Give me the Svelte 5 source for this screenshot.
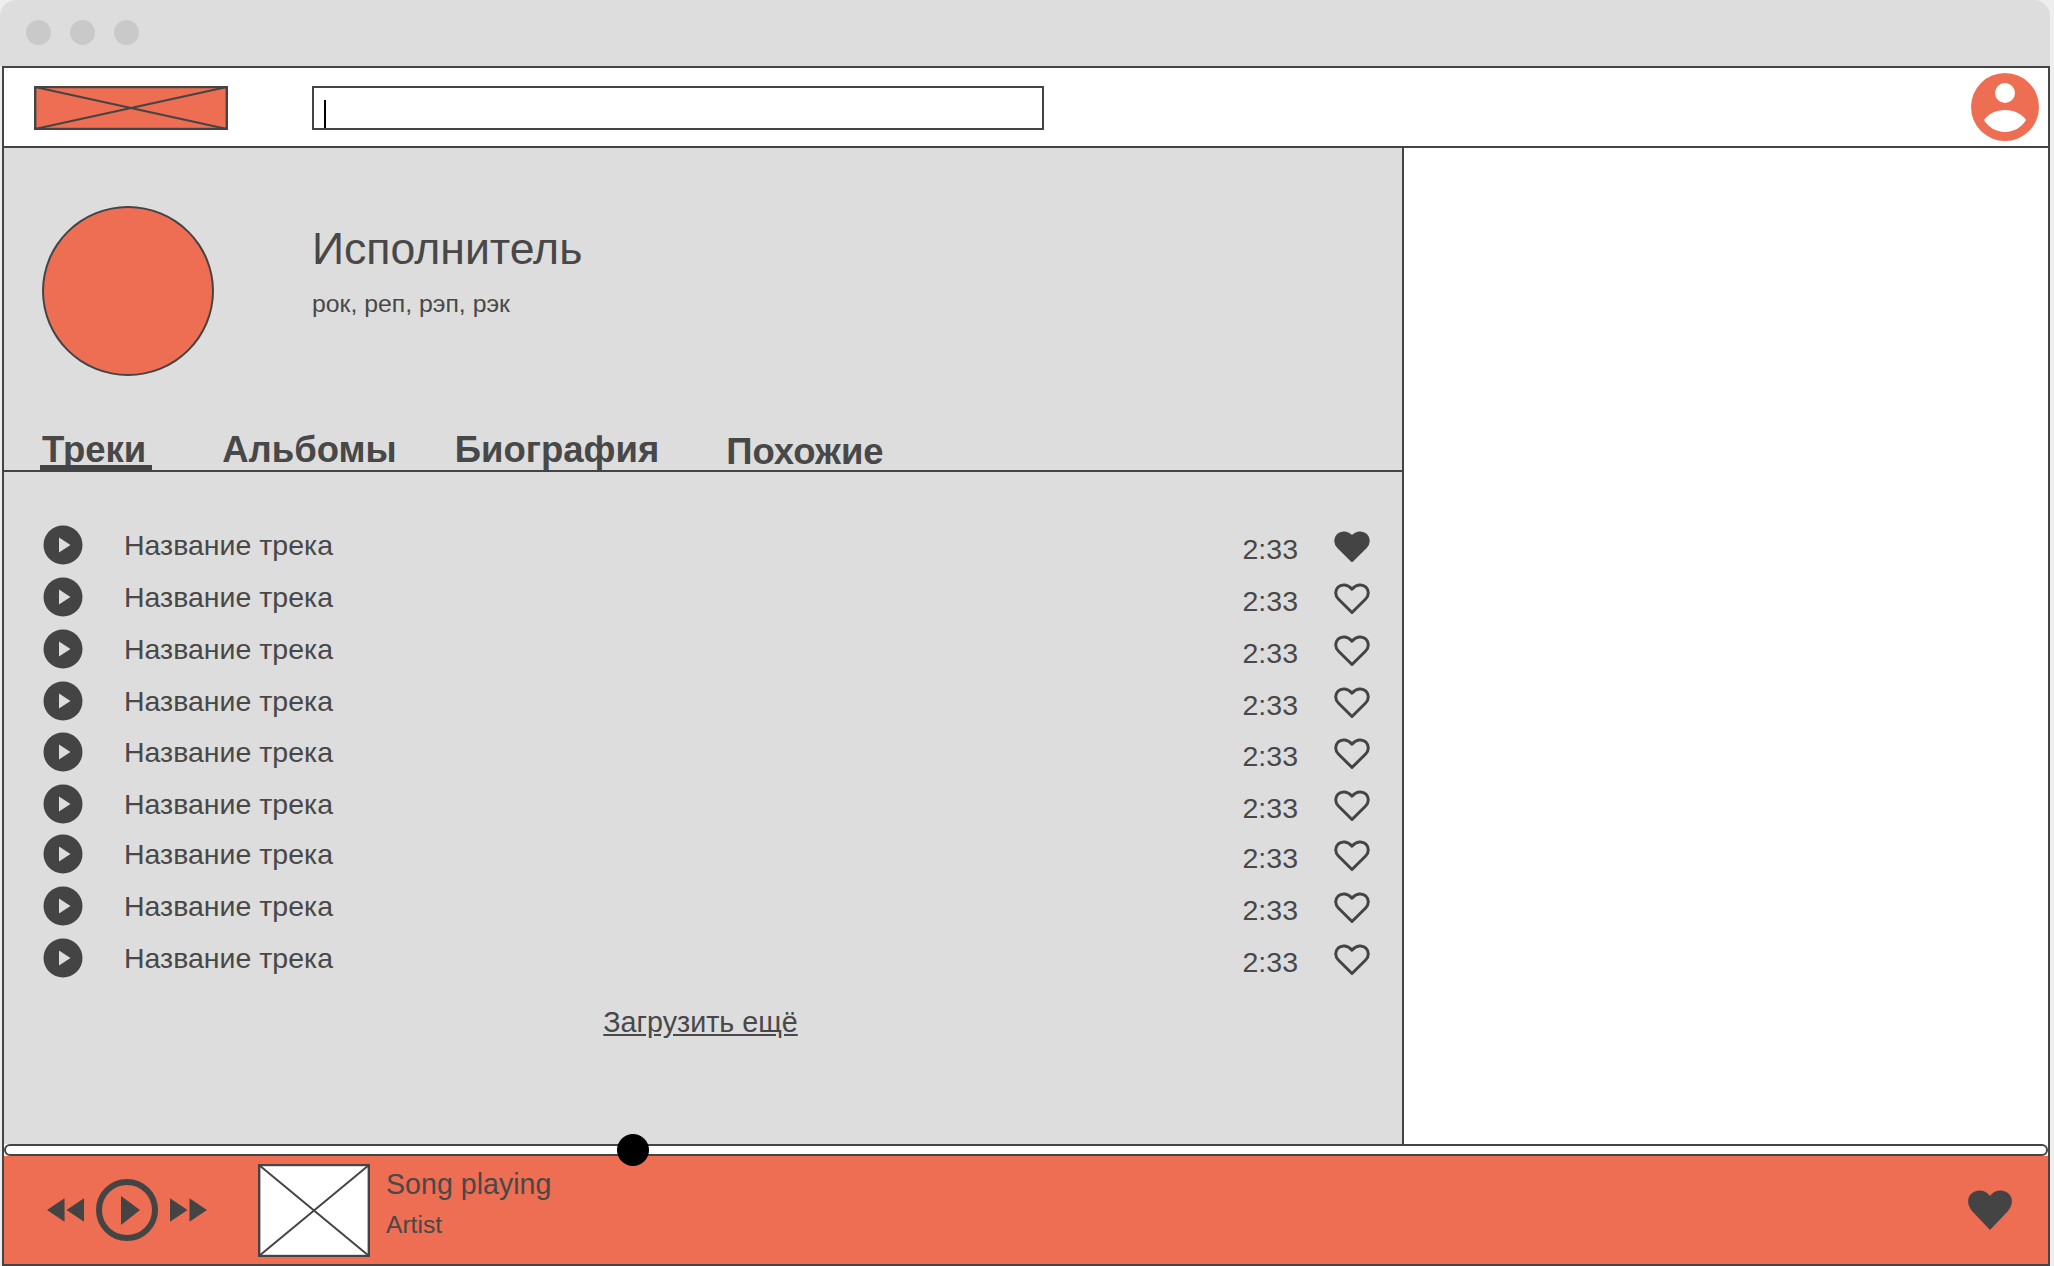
<script>
  const rows = [
    { top: 59, liked: true }, { top: 23 }, { top: 23 }, { top: 23 }, { top: 22 },
    { top: 23 }, { top: 21 }, { top: 23 }, { top: 23 }
  ];
</script>

<div class="window">
  <div class="titlebar">
    <span class="dot"></span><span class="dot"></span><span class="dot"></span>
  </div>
  <div class="frame">
    <header class="top">
      <svg class="logo" viewBox="0 0 194 44" preserveAspectRatio="none">
        <rect x="1.2" y="1" width="191.600" height="42" fill="#ed6e52" stroke="#444" stroke-width="2.400"/>
        <path d="M1 1 193 43M193 1 1 43" stroke="#444" stroke-width="2" fill="none"/>
      </svg>
      <div class="search"><span class="caret"></span></div>
      <svg class="avatar" viewBox="0 0 68 68">
        <circle cx="34" cy="34" r="34" fill="#ed6e52"/>
        <circle cx="34" cy="20" r="10" fill="#fff"/>
        <path d="M13 47C17 41 25 37 34 37S51 41 55 47C51 54 43 59 34 59S17 54 13 47Z" fill="#fff"/>
      </svg>
    </header>
    <div class="body">
      <main class="content">
        <section class="artist">
          <div class="photo"></div>
          <div class="info">
            <h1>Исполнитель</h1>
            <p>рок, реп, рэп, рэк</p>
          </div>
        </section>
        <nav class="tabs">
          <a class="tab active tab1">Треки</a>
          <a class="tab tab2">Альбомы</a>
          <a class="tab tab3">Биография</a>
          <a class="tab tab4">Похожие</a>
        </nav>
        <ul class="tracks">
          {#each rows as r}
            <li class="track" style="margin-top:{r.top}px">
              <svg class="play" viewBox="0 0 40 40">
                <circle cx="20" cy="20" r="19.5" fill="#444"/>
                <path d="M16 12.500 27.500 20 16 27.500Z" fill="#ddd"/>
              </svg>
              <span class="name">Название трека</span>
              <span class="time">2:33</span>
              <svg class="heart" viewBox="0 0 36 32">
                <path d="M18 29.5 4.6 16.2C.6 12.2 1 7.2 4 4.2 7.6.8 13.6 1.2 18 6.2 22.400 1.200 28.400.8 32 4.200 35 7.200 35.400 12.200 31.400 16.200Z"
                  fill={r.liked ? '#444' : 'none'} stroke="#444" stroke-width="3" stroke-linejoin="round"/>
              </svg>
            </li>
          {/each}
        </ul>
        <a class="more">Загрузить ещё</a>
      </main>
      <aside class="side"></aside>
    </div>
    <div class="progress"><span class="knob"></span></div>
    <footer class="player">
      <div class="controls">
        <svg class="skip" viewBox="0 0 38 26"><path d="M0 13 18 1V25ZM20 13 38 1V25Z" fill="#444"/></svg>
        <svg class="big" viewBox="0 0 62 62">
          <circle cx="31" cy="31" r="28" fill="none" stroke="#444" stroke-width="6"/>
          <path d="M25 17 44 31 25 46Z" fill="#444"/>
        </svg>
        <svg class="skip" viewBox="0 0 38 26"><path d="M0 1 18 13 0 25ZM20 1 38 13 20 25Z" fill="#444"/></svg>
      </div>
      <svg class="album" viewBox="0 0 112 93" preserveAspectRatio="none">
        <rect x="1.2" y="1" width="109.600" height="91" fill="#fff" stroke="#444" stroke-width="2.400"/>
        <path d="M1 1 111 92M111 1 1 92" stroke="#444" stroke-width="2" fill="none"/>
      </svg>
      <div class="song">
        <div class="song-title">Song playing</div>
        <div class="song-artist">Artist</div>
      </div>
      <svg class="like" viewBox="0 0 44 40">
        <path d="M22 40 4 21C-1 15-1 8 3 4 8-1 17-1 22 6 27-1 36-1 41 4 45 8 45 15 40 21Z" fill="#444"/>
      </svg>
    </footer>
  </div>
</div>

<style>
  :global(body) {
    margin: 0;
    background: #eee;
    font-family: "Liberation Sans", Arial, sans-serif;
    color: #484848;
  }
  .window { width: 2054px; height: 1266px; overflow: hidden; box-sizing: border-box; padding-left: 2px; }
  .titlebar {
    width: 2050px; height: 66px; margin-left: -2px; padding-left: 26px; box-sizing: border-box;
    background: #ddd; border-radius: 16px 16px 0 0;
    display: flex; align-items: center; gap: 19px;
  }
  .dot { width: 25px; height: 25px; border-radius: 50%; background: #c9c9c9; margin-top: -2px; }
  .frame {
    width: 2048px; height: 1200px; box-sizing: border-box;
    border: 2px solid #444;
    display: flex; flex-direction: column; background: #fff;
  }
  .top {
    height: 80px; flex: none; box-sizing: border-box; border-bottom: 2px solid #444;
    display: flex; align-items: center; padding: 0 9px 0 30px;
  }
  .logo { width: 194px; height: 44px; flex: none; margin-top: 2px; }
  .search {
    width: 732px; height: 44px; box-sizing: border-box; margin-left: 84px; margin-top: 2px;
    border: 2px solid #444; background: #fff; position: relative;
  }
  .caret { position: absolute; left: 10px; top: 12px; bottom: 0; width: 2px; background: #000; }
  .avatar { width: 68px; height: 68px; margin-left: auto; flex: none; }
  .body { flex: 1; display: flex; min-height: 0; }
  .content { width: 1398px; flex: none; background: #ddd; display: flex; flex-direction: column; }
  .side { flex: 1; border-left: 2px solid #444; }
  .artist { display: flex; padding: 58px 0 0 38px; height: 262px; box-sizing: border-box; flex: none; }
  .photo {
    width: 172px; height: 170px; box-sizing: border-box; border-radius: 50%;
    background: #ed6e52; border: 2px solid #444; flex: none;
  }
  .info { margin-left: 98px; }
  h1 { margin: 19px 0 0; font-size: 44.6px; font-weight: 400; line-height: 48px; }
  p { margin: 17px 0 0; font-size: 24.8px; line-height: 28px; }
  .tabs {
    display: flex; height: 62px; box-sizing: border-box; flex: none;
    border-bottom: 2px solid #444; align-items: flex-start;
  }
  .tab { font-size: 36.5px; font-weight: 700; line-height: 42px; margin-top: 19px; }
  .tab1 { margin-left: 38px; position: relative; }
  .tab2 { margin-left: 76px; }
  .tab3 { margin-left: 58px; }
  .tab4 { margin-left: 67px; margin-top: 21px; }
  .active::after {
    content: ""; position: absolute; left: -2px; width: 112px; top: 36px; height: 7px; background: #444;
  }
  .tracks { list-style: none; margin: 0; padding: 0; }
  .track { display: flex; align-items: center; height: 29px; padding-left: 39px; }
  .play { width: 40px; height: 40px; flex: none; margin-top: -1px; }
  .name { margin: -2px 0 0 41px; font-size: 28.5px; line-height: 32px; }
  .time { margin-left: auto; font-size: 28.5px; line-height: 32px; margin-top: 6px; }
  .heart { width: 36px; height: 32px; flex: none; margin: 2px 32px 0 36px; }
  .more { align-self: center; margin: 33px 5px 0 0; font-size: 28.7px; line-height: 32px; text-decoration: underline; }
  .progress {
    height: 12px; box-sizing: border-box; flex: none; background: #fff;
    border: 2px solid #444; border-radius: 6px; position: relative;
  }
  .knob {
    position: absolute; left: 611px; top: -12px; width: 32px; height: 32px; border-radius: 50%; background: #000;
  }
  .player {
    flex: none; height: 108px; background: #ed6e52; display: flex; align-items: center; padding-left: 43px;
  }
  .controls { display: flex; align-items: center; width: 211px; flex: none; gap: 12px; }
  .skip { width: 37px; height: 26px; flex: none; }
  .big { width: 62px; height: 62px; flex: none; }
  .album { width: 112px; height: 93px; flex: none; }
  .song { margin-left: 16px; align-self: flex-start; padding-top: 12px; }
  .song-title { font-size: 28.6px; line-height: 33px; }
  .song-artist { font-size: 24.6px; line-height: 29px; margin-top: 9px; }
  .like { width: 44px; height: 40px; margin-left: auto; margin-right: 36px; flex: none; }
</style>
